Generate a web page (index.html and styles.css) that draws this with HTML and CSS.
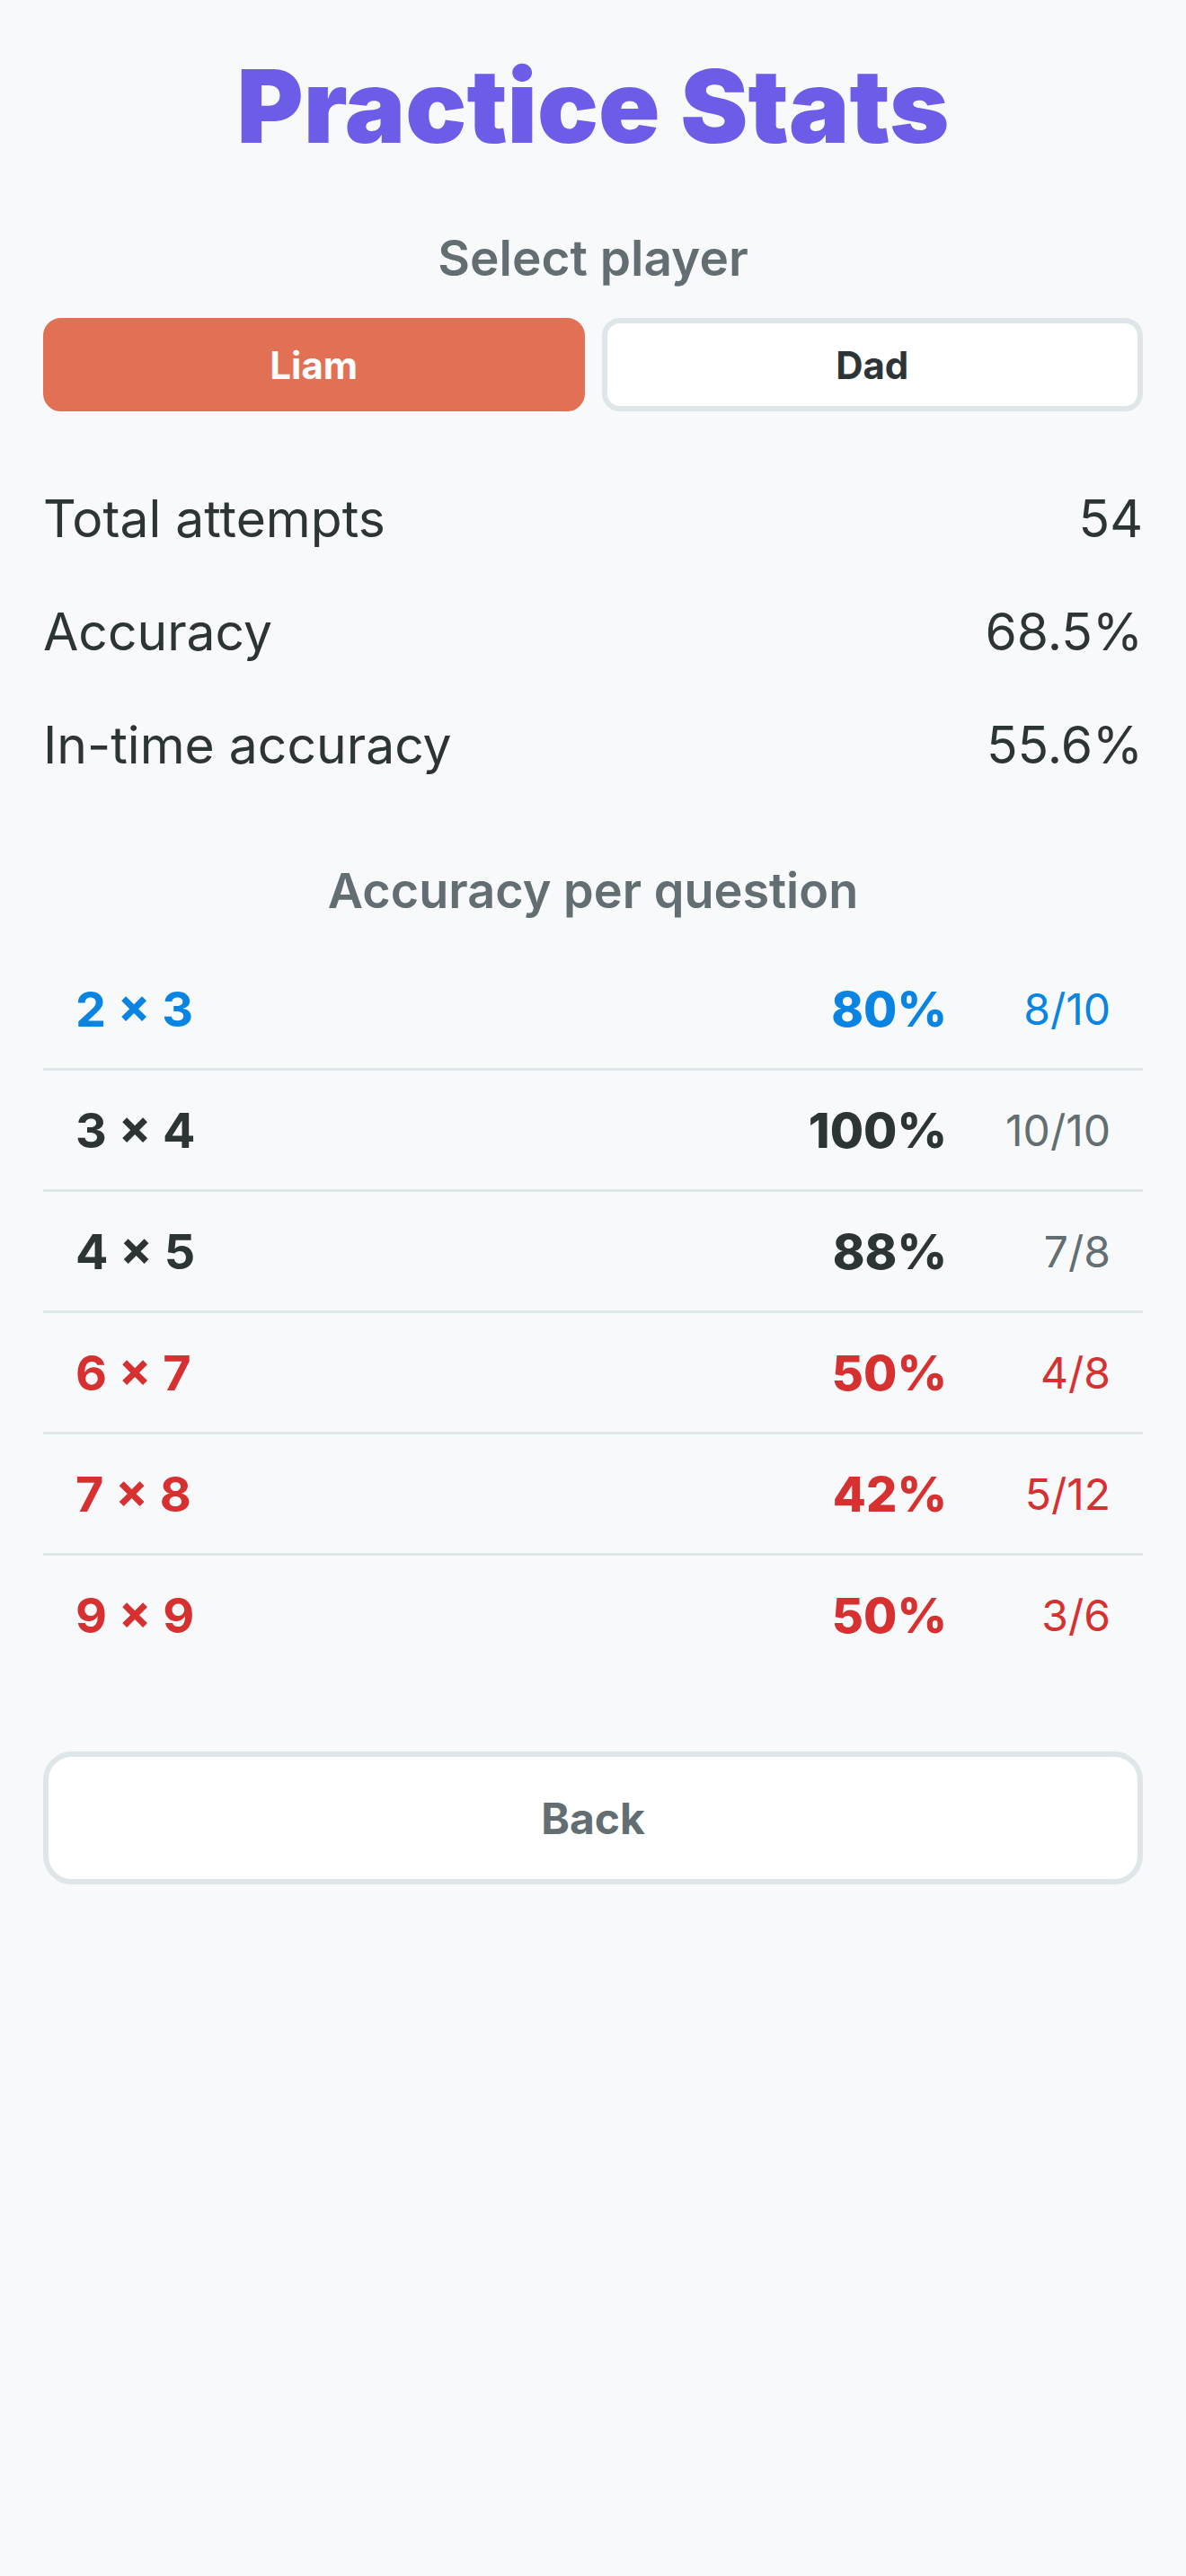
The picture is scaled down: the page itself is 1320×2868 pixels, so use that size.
FILE: index.html
```html
<!DOCTYPE html>
<html lang="en">
	<head>
		<meta charset="UTF-8">
		<meta name="viewport" content="width=device-width, initial-scale=1">
		<title>Practice Stats</title>
		<link rel="stylesheet" href="styles.css">
	</head>
	<body>
		<main class="stats-page">
			<h1 class="page-title">Practice Stats</h1>

			<section class="player-select">
				<h2 class="section-label">Select player</h2>
				<div class="player-toggle">
					<button class="player-btn is-active">Liam</button>
					<button class="player-btn">Dad</button>
				</div>
			</section>

			<dl class="summary">
				<div class="summary-row"><dt>Total attempts</dt><dd>54</dd></div>
				<div class="summary-row"><dt>Accuracy</dt><dd>68.5%</dd></div>
				<div class="summary-row"><dt>In-time accuracy</dt><dd>55.6%</dd></div>
			</dl>

			<h2 class="section-label per-question">Accuracy per question</h2>
			<ul class="question-list">
				<li class="question-row good"><span class="q">2 × 3</span><span class="pct">80%</span><span class="count">8/10</span></li>
				<li class="question-row"><span class="q">3 × 4</span><span class="pct">100%</span><span class="count">10/10</span></li>
				<li class="question-row"><span class="q">4 × 5</span><span class="pct">88%</span><span class="count">7/8</span></li>
				<li class="question-row weak"><span class="q">6 × 7</span><span class="pct">50%</span><span class="count">4/8</span></li>
				<li class="question-row weak"><span class="q">7 × 8</span><span class="pct">42%</span><span class="count">5/12</span></li>
				<li class="question-row weak"><span class="q">9 × 9</span><span class="pct">50%</span><span class="count">3/6</span></li>
			</ul>

			<button class="back-btn">Back</button>
		</main>
	</body>
</html>
```

FILE: styles.css
```css
body {
	margin: 0;
	background: #f8f9fa;
	color: #2d3436;
	font-family: Inter, "Noto Sans", "Liberation Sans", sans-serif;
}

.stats-page {
	padding: 51px 48px 0;
}

.page-title {
	margin: 0;
	font-size: 113px;
	font-weight: 900;
	line-height: 134px;
	text-align: center;
	color: #6c5ce7;
}

.section-label {
	margin: 69px 0 0;
	font-size: 55px;
	font-weight: 600;
	line-height: 66px;
	text-align: center;
	color: #636e72;
}

/* player switch */
.player-toggle {
	display: grid;
	grid-template-columns: 1fr 1fr;
	gap: 19px;
	margin-top: 34px;
}
.player-btn {
	height: 104px;
	border: 6px solid #dfe6e9;
	border-radius: 20px;
	background: #fff;
	color: #2d3436;
	font-family: inherit;
	font-size: 42px;
	font-weight: 700;
	cursor: pointer;
}
.player-btn.is-active {
	border-color: #e17055;
	background: #e17055;
	color: #fff;
}

/* totals */
.summary {
	margin: 57px 0 0;
}
.summary-row {
	display: flex;
	justify-content: space-between;
	padding: 29px 0;
	font-size: 57px;
	line-height: 68px;
}
.summary-row dd {
	margin: 0;
}

.section-label.per-question {
	margin-top: 67px;
	font-size: 54px;
	line-height: 64px;
}

/* per question table */
.question-list {
	list-style: none;
	margin: 33px 0 0;
	padding: 0;
}
.question-row {
	display: flex;
	align-items: center;
	gap: 40px;
	height: 132px;
	padding: 0 36px;
	border-bottom: 3px solid #dfe6e9;
}
.question-row:last-child {
	border-bottom: 0;
}
.question-row .q {
	flex: 1;
	font-size: 54px;
	font-weight: 700;
}
.question-row .pct {
	font-size: 54px;
	font-weight: 800;
}
.question-row .count {
	width: 142px;
	text-align: right;
	font-size: 48px;
	color: #636e72;
}
.question-row.good,
.question-row.good .count {
	color: #0984e3;
}
.question-row.weak,
.question-row.weak .count {
	color: #d63031;
}

.back-btn {
	display: block;
	width: 100%;
	height: 148px;
	margin-top: 86px;
	border: 6px solid #dfe6e9;
	border-radius: 32px;
	background: #fff;
	color: #636e72;
	font-family: inherit;
	font-size: 48px;
	font-weight: 700;
	cursor: pointer;
}
```
